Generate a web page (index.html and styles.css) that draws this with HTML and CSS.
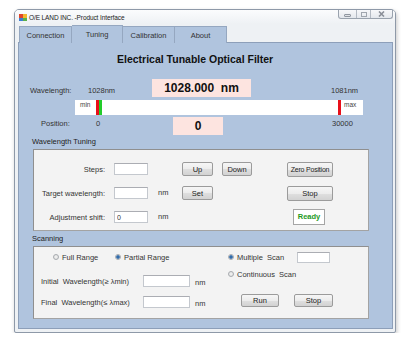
FILE: index.html
```html
<!DOCTYPE html>
<html lang="en">
<head>
    <meta charset="UTF-8">
    <meta name="viewport" content="width=device-width, initial-scale=1.0">
    <title>O/E LAND INC. -Product Interface</title>
    <link rel="stylesheet" href="styles.css">
</head>
<body>
    <div class="window">
        <div class="titlebar">
            <svg class="app-icon" width="8" height="7" viewBox="0 0 8 7">
                <rect x="0" y="0" width="4" height="4" fill="#e0452b"/>
                <rect x="4" y="0" width="4" height="4" fill="#f3b72f"/>
                <rect x="0" y="4" width="4" height="3" fill="#3d7fd1"/>
                <rect x="4" y="4" width="4" height="3" fill="#5bb04a"/>
            </svg>
            <span class="title">O/E LAND INC. -Product Interface</span>
            <div class="caption-btns">
                <span class="cap cap-min"><i></i></span>
                <span class="cap cap-max"><i></i></span>
                <span class="cap cap-close">
                    <svg width="7" height="6" viewBox="0 0 7 6">
                        <path d="M1 0.5 L6 5.5 M6 0.5 L1 5.5" stroke="#8a8f98" stroke-width="1.6"/>
                    </svg>
                </span>
            </div>
        </div>

        <div class="tabs">
            <div class="tab">Connection</div>
            <div class="tab active">Tuning</div>
            <div class="tab">Calibration</div>
            <div class="tab">About</div>
        </div>

        <div class="panel">
            <h1 class="heading">Electrical Tunable Optical Filter</h1>

            <div class="readout-row">
                <span class="lbl wl-lbl">Wavelength:</span>
                <span class="lbl wl-min">1028nm</span>
                <div class="display wl-display">1028.000&nbsp;&nbsp;nm</div>
                <span class="lbl wl-max">1081nm</span>
            </div>

            <div class="slider">
                <span class="slider-txt slider-min">min</span>
                <span class="mark mark-red" style="left: 21px;"></span>
                <span class="mark mark-green" style="left: 24px;"></span>
                <span class="mark mark-red" style="left: 263px;"></span>
                <span class="slider-txt slider-max">max</span>
            </div>

            <div class="position-row">
                <span class="lbl pos-lbl">Position:</span>
                <span class="lbl pos-min">0</span>
                <div class="display pos-display">0</div>
                <span class="lbl pos-max">30000</span>
            </div>

            <div class="group-title">Wavelength Tuning</div>
            <div class="group tuning">
                <span class="f-lbl">Steps:</span>
                <input class="f-in" type="text">
                <span></span>
                <button class="btn btn-small">Up</button>
                <button class="btn btn-small btn-down">Down</button>
                <button class="btn btn-wide btn-zero">Zero Position</button>

                <span class="f-lbl">Target wavelength:</span>
                <input class="f-in" type="text">
                <span class="unit">nm</span>
                <button class="btn btn-small">Set</button>
                <span></span>
                <button class="btn btn-wide">Stop</button>

                <span class="f-lbl">Adjustment shift:</span>
                <input class="f-in" type="text" value="0">
                <span class="unit">nm</span>
                <span></span>
                <span></span>
                <div class="status">Ready</div>
            </div>

            <div class="group-title scan-title">Scanning</div>
            <div class="group scanning">
                <div class="scan-left">
                    <div class="radio-row range-row">
                        <label class="radio-item full"><span class="radio"></span>Full Range</label>
                        <label class="radio-item"><span class="radio checked"></span>Partial Range</label>
                    </div>
                    <div class="field-row">
                        <span class="range-lbl">Initial&nbsp; Wavelength(≥ λmin)</span>
                        <input class="range-in" type="text">
                        <span class="range-unit">nm</span>
                    </div>
                    <div class="field-row final-row">
                        <span class="range-lbl">Final&nbsp; Wavelength(≤ λmax)</span>
                        <input class="range-in" type="text">
                        <span class="range-unit">nm</span>
                    </div>
                </div>
                <div class="scan-right">
                    <div class="radio-row">
                        <label class="radio-item multi"><span class="radio checked"></span>Multiple&nbsp; Scan</label>
                        <input class="count-in" type="text">
                    </div>
                    <div class="radio-row cont-row">
                        <label class="radio-item"><span class="radio"></span>Continuous&nbsp; Scan</label>
                    </div>
                    <div class="run-row">
                        <button class="btn btn-run">Run</button>
                        <button class="btn btn-stop">Stop</button>
                    </div>
                </div>
            </div>
        </div>
    </div>
</body>
</html>
```

FILE: styles.css
```css
* {
    box-sizing: border-box;
}
body {
    margin: 0;
    background: #fff;
    font-family: "Liberation Sans", Arial, sans-serif;
    font-size: 7.5px;
    color: #333;
}
.window {
    margin: 9px 0 0 14px;
    width: 382px;
    height: 324px;
    padding: 0 2px 0 3px;
    border: 1px solid #8e99a8;
    border-radius: 5px 5px 2px 2px;
    background: #eef1f4;
    box-shadow: 1px 2px 4px rgba(0,0,0,0.22);
}

/* title bar */
.titlebar {
    height: 14px;
    display: flex;
    align-items: center;
    background: linear-gradient(#fbfcfd, #eef1f4);
    margin: 0 -2px 0 -3px;
    padding: 0 1px 0 4px;
    border-radius: 4px 4px 0 0;
}
.app-icon {
    margin-top: 1px;
}
.title {
    margin-left: 2px;
    font-size: 6.5px;
    color: #222;
    letter-spacing: -0.1px;
}
.caption-btns {
    margin-left: auto;
    align-self: flex-start;
    display: flex;
    height: 9px;
    border: 1px solid #9aa3ae;
    border-top: none;
    border-radius: 0 0 3px 3px;
    background: linear-gradient(#f7f8fa, #e4e8ed);
    margin-right: 1px;
}
.cap {
    display: flex;
    align-items: center;
    justify-content: center;
    height: 100%;
}
.cap-min {
    width: 18px;
    border-right: 1px solid #b3bac3;
}
.cap-min i {
    width: 7px;
    height: 3px;
    margin-top: 2px;
    border: 1px solid #9097a0;
    border-radius: 1px;
    background: #dfe2e6;
}
.cap-max {
    width: 14px;
    border-right: 1px solid #b3bac3;
}
.cap-max i {
    width: 6px;
    height: 5px;
    border: 1px solid #a0a6ae;
}
.cap-close {
    width: 21px;
}

/* tabs */
.tabs {
    height: 18px;
    display: flex;
    align-items: flex-end;
    padding-left: 1px;
}
.tab {
    height: 17px;
    width: 52px;
    line-height: 17px;
    text-align: center;
    background: #b0c4de;
    border: 1px solid #95a7c0;
    border-bottom: none;
    color: #333;
    font-size: 7.5px;
    margin-bottom: -1px;
    position: relative;
}
.tab:first-child {
    width: 53px;
}
.tab + .tab {
    border-left: none;
}
.tab.active {
    width: 51px;
    height: 18px;
    z-index: 1;
}

/* main panel */
.panel {
    height: 287px;
    background: #b0c4de;
    border: 1px solid #8d9fb9;
}
.heading {
    margin: 0;
    padding: 10px 0 0 98px;
    font-size: 10.5px;
    line-height: 12px;
    color: #111;
}
.lbl {
    line-height: 9px;
    color: #333;
}
.readout-row {
    display: flex;
    align-items: flex-end;
    height: 18px;
    margin-top: 14px;
    padding-left: 11px;
}
.readout-row .lbl {
    margin-bottom: 2px;
}
.wl-lbl {
    width: 58px;
}
.wl-min {
    width: 64px;
}
.wl-max {
    margin-left: 80px;
}
.display {
    height: 18px;
    line-height: 18px;
    background: #fde4e0;
    text-align: center;
    font-weight: bold;
    font-size: 12px;
    color: #111;
}
.wl-display {
    width: 99px;
}
.slider {
    position: relative;
    width: 288px;
    height: 15px;
    margin: 3px 0 0 56px;
    background: #fff;
}
.slider-txt {
    position: absolute;
    top: 1px;
    font-size: 6.5px;
    color: #444;
}
.slider-min {
    left: 5px;
}
.slider-max {
    left: 269px;
}
.mark {
    position: absolute;
    top: 0;
    width: 3px;
    height: 15px;
}
.mark-red {
    background: #e8101a;
}
.mark-green {
    background: #22cc2a;
}
.position-row {
    display: flex;
    align-items: flex-start;
    height: 18px;
    margin-top: 2px;
    padding-left: 22px;
}
.position-row .lbl {
    margin-top: 2px;
}
.pos-lbl {
    width: 55px;
}
.pos-min {
    width: 77px;
}
.pos-display {
    width: 50px;
}
.pos-max {
    margin-left: 109px;
}

/* groups */
.group-title {
    margin-top: 2px;
    padding-left: 13px;
    line-height: 9px;
    color: #222;
}
.scan-title {
    margin-top: 3px;
}
.group {
    margin: 3px 0 0 14px;
    width: 336px;
    background: #f3f3f3;
    border: 1px solid #a3a3a3;
    border-top-color: #8f8f8f;
    border-left-color: #8f8f8f;
}
.tuning {
    height: 82px;
    padding-top: 7px;
    display: grid;
    grid-template-columns: 72px 47px 29px 31px 39px 81px;
    grid-template-rows: 24px 24px 24px;
    align-items: center;
}
.f-lbl {
    text-align: right;
    padding-right: 1px;
}
input {
    font-family: inherit;
    font-size: 7px;
    color: #333;
    background: #fff;
    border: 1px solid #c4c8ce;
    border-top-color: #abadb3;
    padding: 0 2px;
    margin: 0;
    outline: none;
}
.f-in {
    width: 34px;
    height: 12px;
    margin-left: 8px;
}
.unit {
    padding-left: 5px;
    margin-top: -2px;
}
.btn {
    font-family: inherit;
    font-size: 7.5px;
    color: #222;
    padding: 0;
    white-space: nowrap;
    border: 1px solid #9b9b9b;
    border-radius: 2px;
    background: linear-gradient(#f6f6f6, #ececec 50%, #dfdfdf 51%, #d2d2d2);
}
.btn-small {
    width: 31px;
    height: 14px;
}
.btn-down {
    justify-self: end;
    width: 30px;
}
.btn-wide {
    justify-self: end;
    width: 46px;
    height: 15px;
}
.btn-zero {
    font-size: 7px;
    letter-spacing: -0.2px;
}
.status {
    justify-self: end;
    margin-right: 8px;
    width: 32px;
    height: 16px;
    line-height: 14px;
    text-align: center;
    background: #fff;
    border: 1px solid #a5a5a5;
    color: #1e9a1e;
    font-weight: bold;
}

/* scanning */
.scanning {
    height: 73px;
    padding-top: 4px;
    display: flex;
}
.scan-left {
    width: 191px;
}
.radio-row {
    display: flex;
    align-items: center;
    height: 12px;
}
.range-row {
    padding-left: 19px;
}
.radio-item {
    display: flex;
    align-items: center;
}
.radio-item.full {
    width: 62px;
}
.radio {
    width: 6px;
    height: 6px;
    margin-right: 3px;
    border: 1px solid #a7abb0;
    border-radius: 50%;
    background: radial-gradient(circle, #f3f3f3, #dcdcdc);
}
.radio.checked {
    background: radial-gradient(circle, #2a5f9a 0, #3d78b8 1.5px, #c9d8ea 2.2px, #e8eef5 3px);
}
.field-row {
    display: flex;
    align-items: center;
    height: 12px;
    margin-top: 12px;
    padding-left: 7px;
}
.final-row {
    margin-top: 9px;
}
.range-lbl {
    width: 102px;
}
.range-in {
    width: 47px;
    height: 12px;
}
.range-unit {
    margin-left: 5px;
    margin-top: 2px;
}
.scan-right {
    flex: 1;
    padding-left: 3px;
}
.radio-item.multi {
    width: 69px;
}
.count-in {
    width: 33px;
    height: 11px;
}
.cont-row {
    margin-top: 5px;
}
.run-row {
    display: flex;
    margin-top: 14px;
    padding-left: 13px;
}
.btn-run {
    width: 38px;
    height: 13px;
}
.btn-stop {
    width: 39px;
    height: 13px;
    margin-left: 15px;
}
```
